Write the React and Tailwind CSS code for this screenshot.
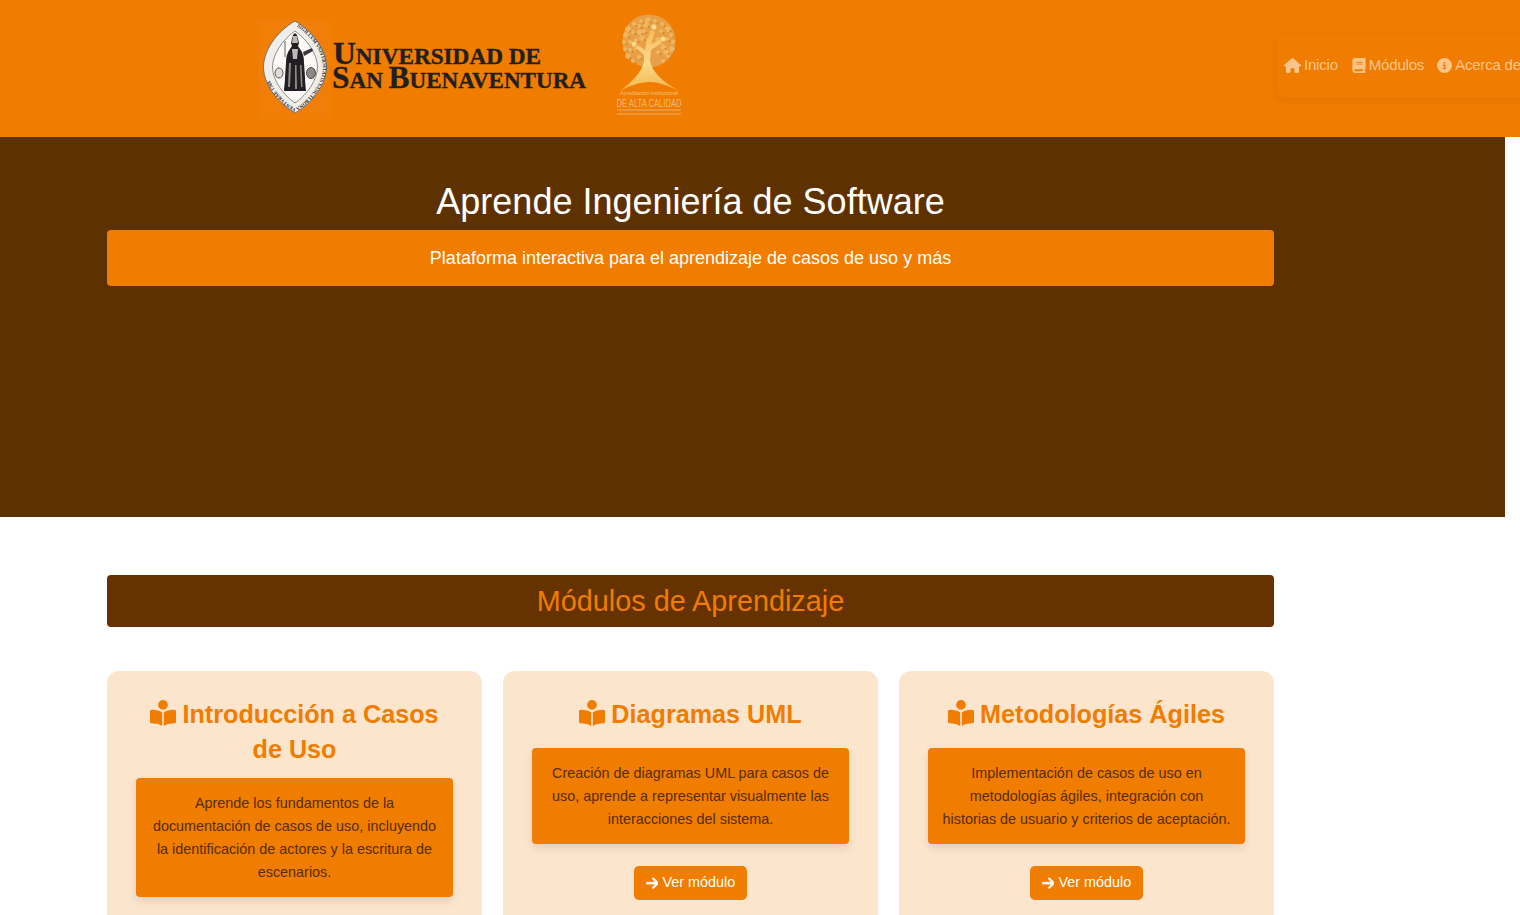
import React from "react";
import { FaHouse, FaBook, FaCircleInfo, FaBookOpenReader, FaArrowRight } from "react-icons/fa6";

const sans = "font-['Liberation_Sans',Arial,sans-serif]";

const leaves = [
  [14,14],[20,9],[27,6],[34,5],[41,6],[48,9],[54,14],[57,20],[59,27],[58,34],[54,41],[49,46],[12,20],[10,27],[11,34],
  [14,41],[19,46],[25,11],[32,10],[39,11],[19,17],[26,17],[47,16],[53,24],[49,32],[16,27],[22,25],[28,23],[16,35],[22,33],[52,37],[44,37],[25,42],[44,25],[30,16],[37,17]
];

function Seal() {
  const outer = "M37 2 C56 13 68.500 32 68.500 48 C68.500 64 56 83 37 94 C18 83 5.500 64 5.500 48 C5.500 32 18 13 37 2 Z";
  return (
    <svg width="72" height="100" viewBox="0 0 72 100" className="shrink-0 overflow-visible">
      <rect x="0" y="0" width="72" height="100" fill="#f17e06" />
      <path d={outer} fill="#f0eee9" stroke="#77736f" strokeWidth="1" />
      <path id="sealring" d="M37 6.500 C54 17 65 34 65 48 C65 62 54 79 37 89.500 C20 79 9 62 9 48 C9 34 20 17 37 6.500 Z" fill="none" />
      <text fontSize="5" fontWeight="700" fill="#1f1d1a" fontFamily="'Liberation Serif',serif">
        <textPath href="#sealring" startOffset="2">SIGILLVM VNIVERSITATIS SANCTI BONAVENTVRAE 1708</textPath>
      </text>
      <path d="M37 12 C50 21 59.500 36 59.500 48 C59.500 60 50 75 37 84 C24 75 14.500 60 14.500 48 C14.500 36 24 21 37 12 Z" fill="#fbfaf7" stroke="#4c4a47" strokeWidth="0.6" />
      <path d="M33 24 L35 16 L37 14 L39 16 L41 24 L40 27 L42 30 C45 34 46 38 46 44 L47 58 C47 64 48 70 48 72 L26 72 C26 68 27 64 27 58 L28 44 C28 38 29 34 32 30 L34 27 Z" fill="#211f24" />
      <path d="M35 17 H39 L40 24 H34 Z M34 30 H40 L39 40 H35 Z" fill="#bdb9b3" />
      <path d="M31 44 L33 44 L32 68 L30 68 Z M37 46 L38.500 46 L39 70 L37 70 Z M42 46 L43.500 46 L44.500 68 L43 68 Z" fill="#8e8b87" />
      <path d="M45 33 L54 29 L55 32 L46 37 Z" fill="#39373a" />
      <path d="M25 30 L25 14" stroke="#39373a" strokeWidth="0.8" transform="translate(2 8)" />
      <ellipse cx="21" cy="54" rx="4" ry="5" fill="#dfdcd7" stroke="#33312f" strokeWidth="0.8" />
      <ellipse cx="53" cy="54" rx="4.500" ry="5.500" fill="#8b8987" stroke="#33312f" strokeWidth="0.8" />
    </svg>
  );
}

function Wordmark() {
  return (
    <svg width="258" height="56" viewBox="0 0 258 56" className="shrink-0 overflow-visible" fontFamily="'Liberation Serif',serif" fontWeight="700" fill="#221f22" stroke="#221f22" strokeWidth="0.35">
      <text x="2" y="23" textLength="208" lengthAdjust="spacingAndGlyphs" fontSize="23.500">
        <tspan fontSize="32">U</tspan>NIVERSIDAD DE
      </text>
      <text x="1" y="47" textLength="254" lengthAdjust="spacingAndGlyphs" fontSize="23.500">
        <tspan fontSize="32">S</tspan>AN <tspan fontSize="32">B</tspan>UENAVENTURA
      </text>
    </svg>
  );
}

function Tree() {
  return (
    <svg width="70" height="106" viewBox="0 0 70 106" className="shrink-0 overflow-visible">
      <defs>
        <linearGradient id="gold" x1="0" y1="0" x2="0" y2="1">
          <stop offset="0" stopColor="#f7bc5c" />
          <stop offset="0.55" stopColor="#f9d98a" />
          <stop offset="1" stopColor="#f5b54a" />
        </linearGradient>
      </defs>
      <circle cx="35" cy="26" r="26.500" fill="#e8a046" />
      <g fill="#f0b662">
        {leaves.map(([x, y], i) => (
          <circle key={i} cx={x} cy={y} r={i % 3 === 0 ? 2.8 : 2} />
        ))}
      </g>
      <g fill="#cf8326">
        {leaves.map(([x, y], i) => (
          <circle key={i} cx={x + 2.5} cy={y + 2} r="0.9" />
        ))}
      </g>
      <path d="M38 15 L41 17 L37 29 L46 25 L48 28 L37 35 L36 46 C38 56 48 67 64 75 C52 70 44 67 36 67 C26 67 14 71 6 76 C16 68 28 58 30 46 L30 40 L22 33 L24 30 L31 35 L33 24 Z" fill="url(#gold)" />
      <circle cx="40" cy="12" r="2.500" fill="#f9d98a" />
      <circle cx="20" cy="29" r="2.500" fill="#f9d98a" />
      <circle cx="49" cy="24" r="2.500" fill="#f9d98a" />
      <text x="35" y="80" textAnchor="middle" textLength="58" lengthAdjust="spacingAndGlyphs" fontSize="5" fill="#f4c27e" fontFamily="'Liberation Sans',sans-serif">Acreditación Institucional</text>
      <text x="35" y="92" textAnchor="middle" textLength="65" lengthAdjust="spacingAndGlyphs" fontSize="11" fill="#f2b976" fontFamily="'Liberation Sans',sans-serif">DE ALTA CALIDAD</text>
      <path d="M3 95 H67 M3 99 H67" stroke="#ec9e48" strokeWidth="1.400" />
    </svg>
  );
}

function Card({ title, text }) {
  return (
    <div className="flex flex-col items-center rounded-xl bg-[#fce5cd] px-[29px] pt-[26px] pb-6">
      <h3 className="mb-[14px] text-center text-[25.2px] leading-[30px] font-bold text-[#f07c00]">
        <span className="inline-block h-[37px] w-0 align-[-11.3px]" />
        <FaBookOpenReader className="mr-[6px] inline-block h-[26px] w-[26px] align-[-3px]" />
        {title}
      </h3>
      <p className="mb-[22px] w-full rounded bg-[#f07c00] pt-[14px] pr-[14px] pb-[13px] pl-[14px] text-center text-[14.4px] leading-[23px] text-[#552d00] shadow-[0_4px_8px_rgba(0,0,0,0.1)]">
        {text}
      </p>
      <a className="flex h-[34px] w-[113px] items-center justify-center gap-[4px] rounded-[5px] bg-[#f07c00] text-[14.4px] text-white">
        <FaArrowRight className="h-[14.4px] w-[12.6px]" stroke="currentColor" strokeWidth="24" />
        Ver módulo
      </a>
    </div>
  );
}

export default function App() {
  return (
    <div className={`h-[915px] w-[1520px] overflow-hidden bg-white ${sans}`}>
      <header className="flex h-[137px] w-[1520px] items-center overflow-hidden bg-[#f07c00]">
        <div className="flex w-[1277px] shrink-0 items-center pl-[258px]">
          <Seal />
          <div className="ml-[1px]"><Wordmark /></div>
          <div className="ml-[25px] mt-[-1px]"><Tree /></div>
        </div>
        <nav className="mt-[-4px] flex h-[63px] w-[300px] shrink-0 items-center gap-[14px] rounded-lg bg-[#f07c00] pb-[3px] pl-[7px] text-[15px] tracking-[-0.2px] whitespace-nowrap text-[#fdc48a] shadow-[0_2px_8px_rgba(0,0,0,0.06)]">
          <span className="flex items-center gap-[3px]"><FaHouse className="h-[15px] w-[17px]" />Inicio</span>
          <span className="flex items-center gap-[3px]"><FaBook className="h-[15px] w-[14px]" />Módulos</span>
          <span className="-ml-[1px] flex items-center gap-[3px]"><FaCircleInfo className="h-[15px] w-[15px]" />Acerca de</span>
        </nav>
      </header>

      <section className="h-[380px] w-[1505px] bg-[#5e3200] pt-[43px] pl-[107px]">
        <div className="w-[1167px] text-center">
          <h1 className="text-[36px] leading-[44px] font-normal text-white">Aprende Ingeniería de Software</h1>
          <p className="mt-[6px] flex h-[56px] items-center justify-center rounded bg-[#f07c00] text-[18px] text-white">
            Plataforma interactiva para el aprendizaje de casos de uso y más
          </p>
        </div>
      </section>

      <main className="w-[1505px] pt-[58px] pl-[107px]">
        <div className="w-[1167px]">
          <h2 className="flex h-[52px] items-center justify-center rounded bg-[#663300] pt-[2px] text-[28.8px] font-normal text-[#f07c00]">
            Módulos de Aprendizaje
          </h2>
          <div className="mt-[44px] grid grid-cols-3 gap-[21px]">
            <Card title="Introducción a Casos de Uso" text="Aprende los fundamentos de la documentación de casos de uso, incluyendo la identificación de actores y la escritura de escenarios." />
            <Card title="Diagramas UML" text="Creación de diagramas UML para casos de uso, aprende a representar visualmente las interacciones del sistema." />
            <Card title="Metodologías Ágiles" text="Implementación de casos de uso en metodologías ágiles, integración con historias de usuario y criterios de aceptación." />
          </div>
        </div>
      </main>
    </div>
  );
}
